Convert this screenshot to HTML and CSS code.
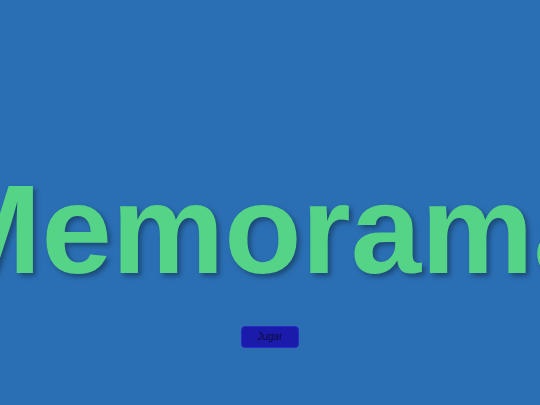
FILE: index.html
```html
<!DOCTYPE html>
<html lang="es">
<head>
<meta charset="utf-8">
<title>Memorama</title>
<link rel="stylesheet" href="styles.css">
</head>
<body>
<main class="screen">
  <div class="title-row">
    <h1 class="title">Memorama</h1>
  </div>
  <button class="play" type="button">Jugar</button>
</main>
</body>
</html>
```
FILE: styles.css
```css
html, body {
  margin: 0;
  padding: 0;
  height: 100%;
  overflow: hidden;
}
body {
  background: #2a6fb4;
  font-family: "Liberation Sans", Arial, sans-serif;
}
.screen {
  display: flex;
  flex-direction: column;
  align-items: center;
  padding-top: 166px;
}
.title-row {
  display: flex;
  justify-content: center;
  width: 100%;
}
.title {
  margin: 0;
  flex: none;
  white-space: nowrap;
  font-size: 126.5px;
  line-height: 126px;
  font-weight: 700;
  color: #55d386;
  text-shadow: 3px 3px 5px rgba(0, 0, 0, 0.35);
}
.play {
  margin-top: 34px;
  padding: 4px 15px;
  border: 1px solid #2a2ac4;
  border-radius: 4px;
  background: #1b1bab;
  color: #0a0a40;
  font-family: "Liberation Sans", Arial, sans-serif;
  font-size: 10px;
  line-height: 12px;
}
```
